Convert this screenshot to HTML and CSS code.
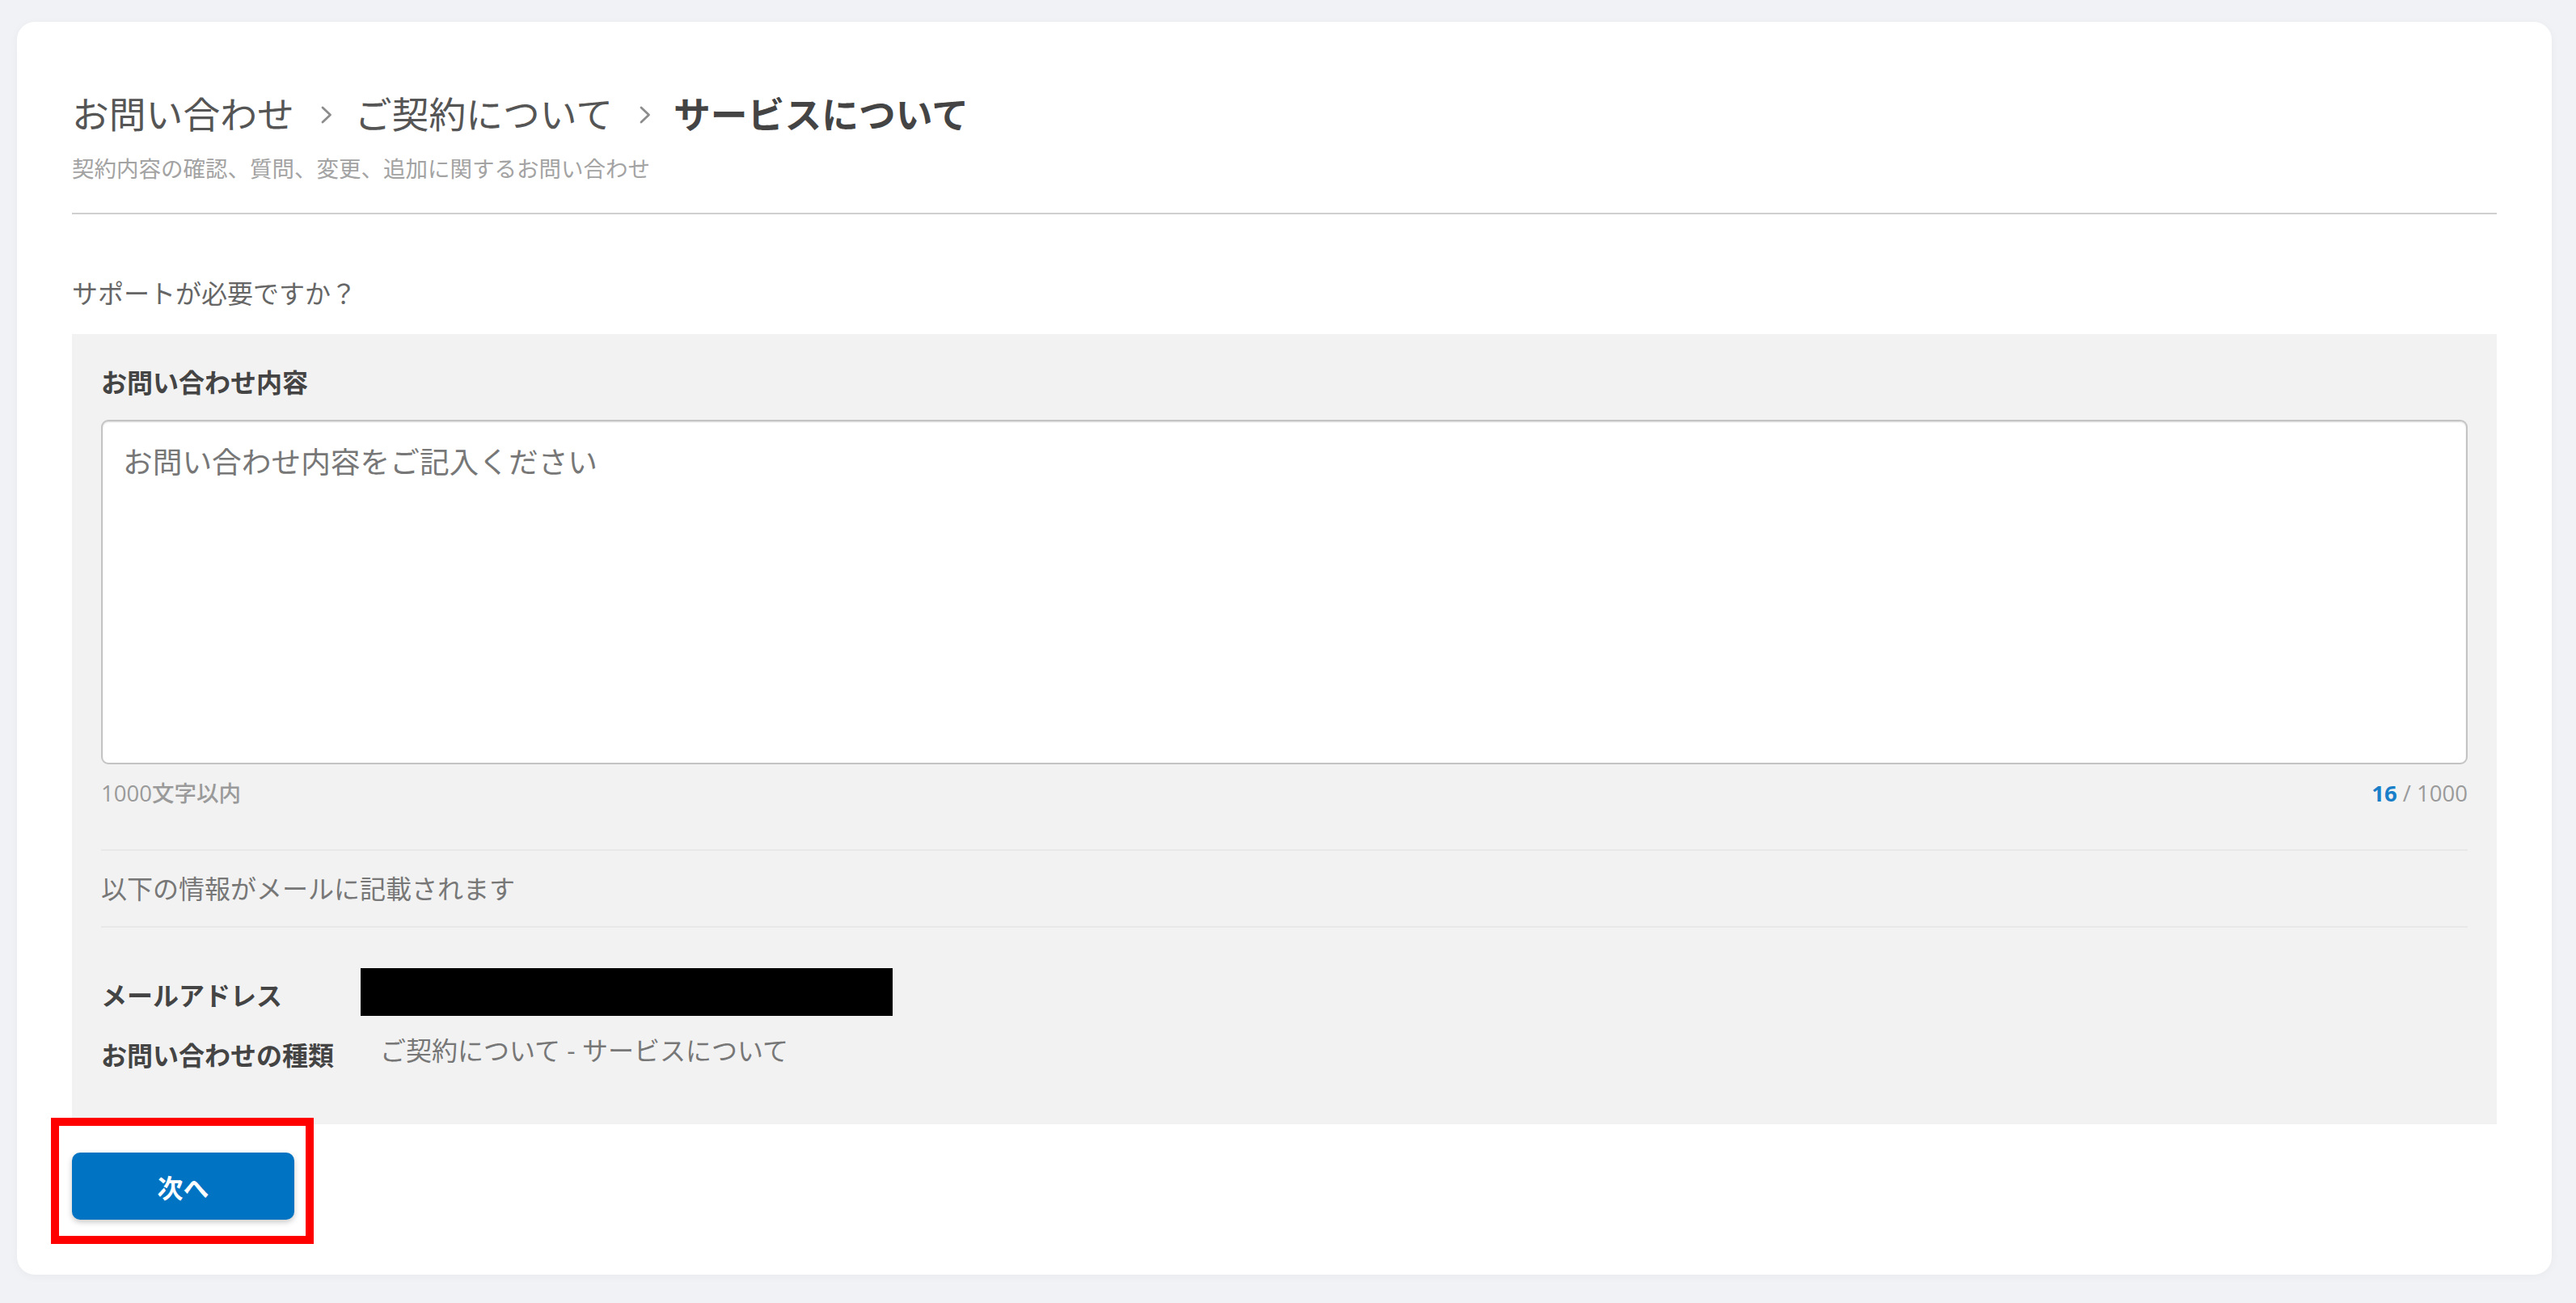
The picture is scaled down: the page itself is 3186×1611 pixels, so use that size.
FILE: index.html
```html
<!DOCTYPE html>
<html lang="ja">
<head>
<meta charset="utf-8">
<title>お問い合わせ</title>
<link rel="stylesheet" href="styles.css">
</head>
<body>
<main class="card">
  <nav class="breadcrumb">
    <span class="crumb">お問い合わせ</span>
    <svg class="chev" viewBox="0 0 16 26" width="16" height="26"><polyline points="3,4 12.5,13 3,22" fill="none" stroke="#8c8c8c" stroke-width="2.8" stroke-linecap="round" stroke-linejoin="round"/></svg>
    <span class="crumb">ご契約について</span>
    <svg class="chev" viewBox="0 0 16 26" width="16" height="26"><polyline points="3,4 12.5,13 3,22" fill="none" stroke="#8c8c8c" stroke-width="2.8" stroke-linecap="round" stroke-linejoin="round"/></svg>
    <span class="crumb current">サービスについて</span>
  </nav>
  <p class="subtitle">契約内容の確認、質問、変更、追加に関するお問い合わせ</p>
  <div class="divider"></div>
  <p class="question">サポートが必要ですか？</p>
  <section class="panel">
    <label class="field-label" for="msg">お問い合わせ内容</label>
    <textarea id="msg" class="textarea" placeholder="お問い合わせ内容をご記入ください"></textarea>
    <div class="counter-row">
      <span class="hint">1000文字以内</span>
      <span class="count"><b class="count-now">16</b> / 1000</span>
    </div>
    <div class="mail-note">以下の情報がメールに記載されます</div>
    <div class="info">
      <div class="info-row">
        <span class="info-label first">メールアドレス</span>
        <span class="redacted"></span>
      </div>
      <div class="info-row second">
        <span class="info-label">お問い合わせの種類</span>
        <span class="info-value">ご契約について - サービスについて</span>
      </div>
    </div>
  </section>
  <div class="actions">
    <button class="btn-primary" type="button">次へ</button>
    <span class="annotation"></span>
  </div>
</main>
</body>
</html>
```

FILE: styles.css
```css
* { box-sizing: border-box; }

html, body {
  margin: 0;
  padding: 0;
}

body {
  background: #f0f2f5;
  font-family: "Open Sans", "Noto Sans CJK JP", sans-serif;
  color: #555;
}

.card {
  margin: 27px 30px 35px 21px;
  background: #fff;
  border-radius: 22px;
  padding: 83px 68px 68px;
  box-shadow: 0 2px 12px rgba(0, 0, 0, 0.04);
}

.breadcrumb {
  display: flex;
  align-items: center;
  font-size: 45.8px;
  line-height: 63px;
  color: #555;
}

.chev {
  margin: 0 27px 0 32px;
  flex: none;
}

.crumb.current {
  font-weight: 700;
  color: #444;
}

.subtitle {
  margin: 16px 0 0;
  font-size: 27.5px;
  line-height: 40px;
  color: #a3a3a3;
}

.divider {
  margin-top: 34px;
  height: 2px;
  background: #d0d0d0;
}

.question {
  margin: 74px 0 0;
  font-size: 32px;
  line-height: 47px;
  color: #666;
}

.panel {
  margin-top: 27px;
  background: #f2f2f2;
  padding: 36px 36px 62px;
}

.field-label {
  display: block;
  font-size: 32px;
  line-height: 47px;
  font-weight: 700;
  color: #444;
}

.textarea {
  display: block;
  width: 100%;
  height: 426px;
  margin-top: 23px;
  padding: 23px 25px;
  border: 2px solid #c4c4c4;
  border-radius: 9px;
  background: #fff;
  box-shadow: inset 0 1px 2px rgba(0, 0, 0, 0.14);
  font-family: "Open Sans", "Noto Sans CJK JP", sans-serif;
  font-size: 36.7px;
  line-height: 54px;
  color: #444;
  resize: none;
  outline: none;
}

.textarea::placeholder {
  color: #777;
  opacity: 1;
}

.counter-row {
  display: flex;
  justify-content: space-between;
  margin-top: 16px;
  font-size: 27.5px;
  line-height: 40px;
  color: #9a9a9a;
}

.hint {
  font-weight: 500;
}

.count-now {
  color: #1a7fc9;
  font-weight: 700;
}

.mail-note {
  margin-top: 49px;
  padding: 23px 0;
  border-top: 2px solid #e8e8e8;
  border-bottom: 2px solid #e8e8e8;
  font-size: 32px;
  line-height: 47px;
  color: #777;
}

.info {
  margin-top: 50px;
}

.info-row {
  display: flex;
  align-items: center;
}

.info-row.second {
  align-items: flex-start;
  margin-top: 25px;
}

.info-label {
  width: 345px;
  flex: none;
  font-size: 32px;
  line-height: 47px;
  font-weight: 700;
  color: #444;
}

.info-label.first {
  margin-top: 8px;
}

.redacted {
  display: block;
  width: 658px;
  height: 59px;
  margin-left: -24px;
  background: #000;
}

.info-value {
  font-size: 32px;
  line-height: 35px;
  color: #777;
}

.actions {
  position: relative;
  margin-top: 35px;
}

.btn-primary {
  display: block;
  width: 275px;
  height: 83px;
  border: none;
  border-radius: 10px;
  background: #0074c2;
  color: #fff;
  font-family: "Open Sans", "Noto Sans CJK JP", sans-serif;
  font-size: 32px;
  font-weight: 700;
  box-shadow: 0 3px 7px rgba(0, 0, 0, 0.22);
  cursor: pointer;
}

.annotation {
  position: absolute;
  left: -26px;
  top: -43px;
  width: 325px;
  height: 156px;
  border: 10px solid #ff0000;
  pointer-events: none;
}
```
